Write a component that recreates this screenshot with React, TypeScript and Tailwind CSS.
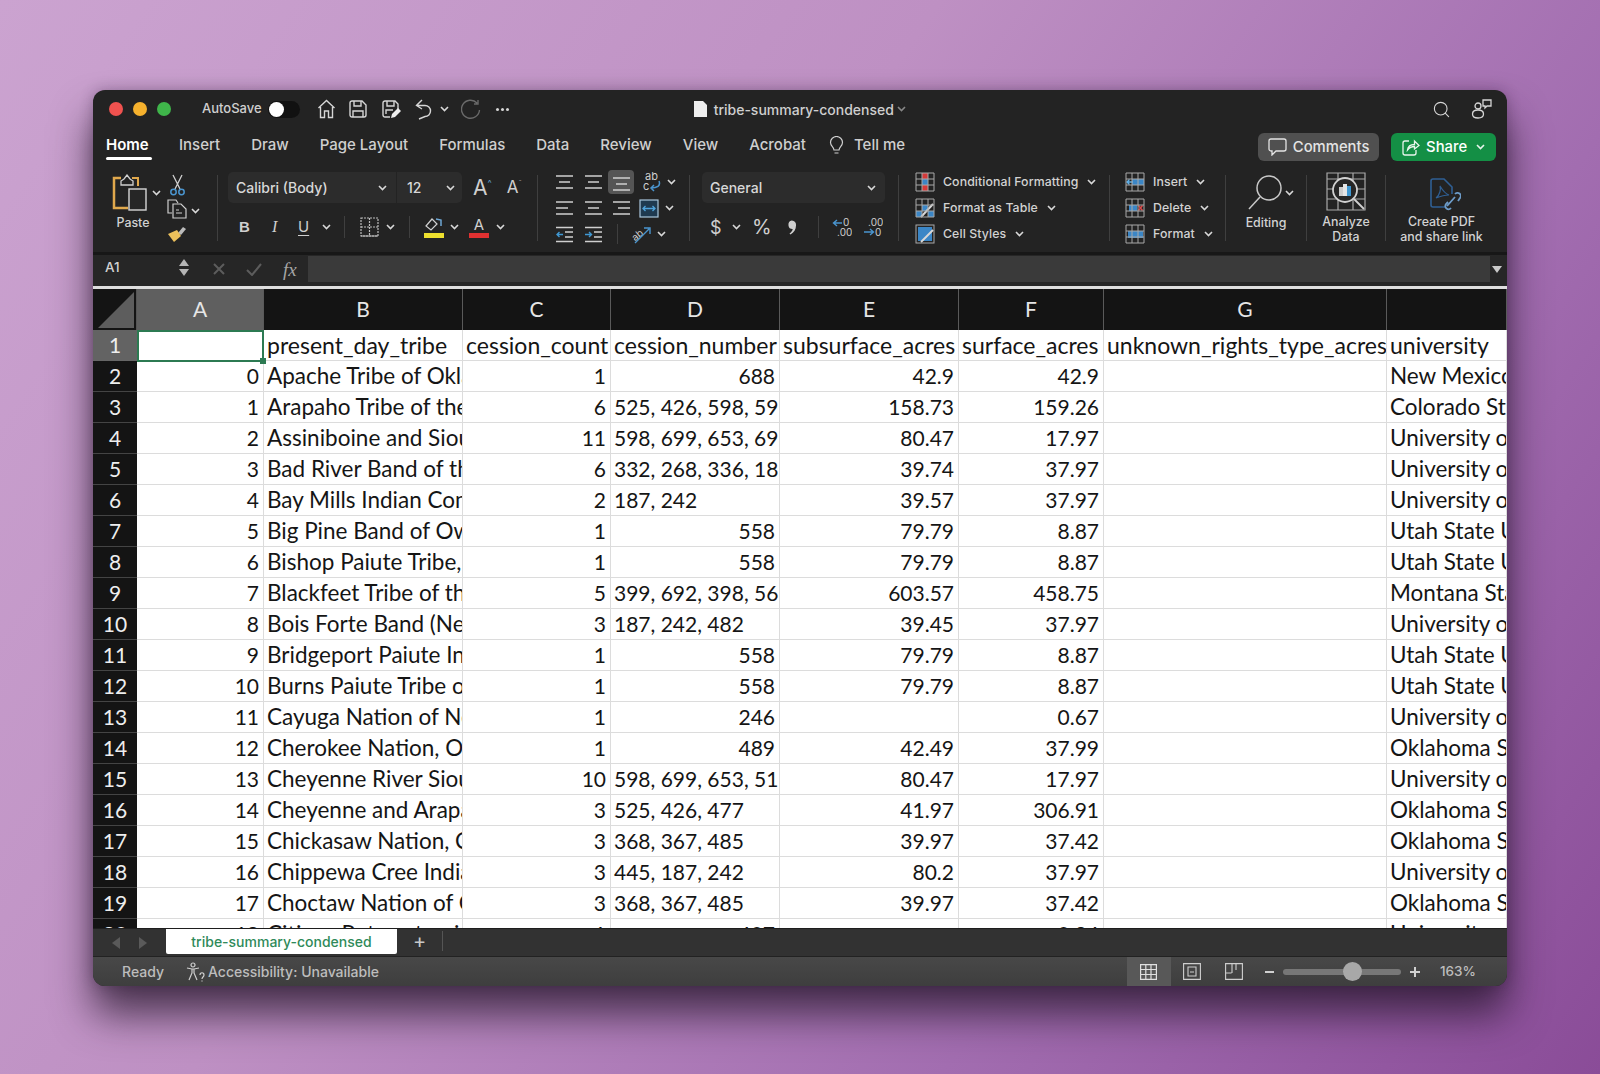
import { Search } from 'lucide-react';

const UI = "font-['Inter','Liberation_Sans',sans-serif]";
const CELL = "font-['Lato','Open_Sans',sans-serif]";

const rows: [string, string, string, string, string, string, string][] = [
  ['0', 'Apache Tribe of Oklahoma', '1', '688', '42.9', '42.9', 'New Mexico State University'],
  ['1', 'Arapaho Tribe of the Wind River', '6', '525, 426, 598, 599', '158.73', '159.26', 'Colorado State University'],
  ['2', 'Assiniboine and Sioux Tribes', '11', '598, 699, 653, 698', '80.47', '17.97', 'University of Minnesota'],
  ['3', 'Bad River Band of the Lake', '6', '332, 268, 336, 187', '39.74', '37.97', 'University of Minnesota'],
  ['4', 'Bay Mills Indian Community', '2', '187, 242', '39.57', '37.97', 'University of Minnesota'],
  ['5', 'Big Pine Band of Owens Valley', '1', '558', '79.79', '8.87', 'Utah State University'],
  ['6', 'Bishop Paiute Tribe, California', '1', '558', '79.79', '8.87', 'Utah State University'],
  ['7', 'Blackfeet Tribe of the Blackfeet', '5', '399, 692, 398, 567', '603.57', '458.75', 'Montana State University'],
  ['8', 'Bois Forte Band (Nett Lake)', '3', '187, 242, 482', '39.45', '37.97', 'University of Minnesota'],
  ['9', 'Bridgeport Paiute Indian Colony', '1', '558', '79.79', '8.87', 'Utah State University'],
  ['10', 'Burns Paiute Tribe of the Burns', '1', '558', '79.79', '8.87', 'Utah State University'],
  ['11', 'Cayuga Nation of New York', '1', '246', '', '0.67', 'University of Vermont'],
  ['12', 'Cherokee Nation, Oklahoma', '1', '489', '42.49', '37.99', 'Oklahoma State University'],
  ['13', 'Cheyenne River Sioux Tribe', '10', '598, 699, 653, 517', '80.47', '17.97', 'University of Minnesota'],
  ['14', 'Cheyenne and Arapaho Tribes', '3', '525, 426, 477', '41.97', '306.91', 'Oklahoma State University'],
  ['15', 'Chickasaw Nation, Oklahoma', '3', '368, 367, 485', '39.97', '37.42', 'Oklahoma State University'],
  ['16', 'Chippewa Cree Indians of Rocky', '3', '445, 187, 242', '80.2', '37.97', 'University of Minnesota'],
  ['17', 'Choctaw Nation of Oklahoma', '3', '368, 367, 485', '39.97', '37.42', 'Oklahoma State University'],
  ['18', 'Citizen Potawatomi Nation', '1', '407', '', '0.94', 'University of Kansas'],
];

const COLS = 'grid grid-cols-[44px_127px_199px_148px_169px_179px_145px_283px_120px]';

function Chev({ className = '', color = '#d8d8d8' }: { className?: string; color?: string }) {
  return (
    <svg width="9" height="6" viewBox="0 0 9 6" className={className} fill="none">
      <path d="M1 1l3.5 3.5L8 1" stroke={color} strokeWidth="1.6" />
    </svg>
  );
}

function Sep({ className = 'h-[66px] mt-[10px]' }: { className?: string }) {
  return <div className={`w-px shrink-0 bg-[#3f3f3f] ${className}`} />;
}

function Lines({ l, dim }: { l: [number, number][]; dim?: boolean }) {
  return (
    <svg width="19" height="16" viewBox="0 0 19 16" fill="none" stroke={dim ? '#bdbdbd' : '#d0d0d0'} strokeWidth="1.4">
      {l.map(([a, b], i) => (
        <path key={i} d={`M${a} ${2 + i * 6}H${b}`} />
      ))}
    </svg>
  );
}

function Indent({ flip }: { flip?: boolean }) {
  return (
    <svg width="19" height="17" viewBox="0 0 19 17" fill="none">
      <path d="M1 1.5h17M1 15.5h17M10 6h8M10 11h8" stroke="#cfcfcf" strokeWidth="1.3" />
      {flip ? (
        <path d="M1 8.5h6M5 6l2.5 2.5L5 11" stroke="#3f97d1" strokeWidth="1.4" />
      ) : (
        <path d="M8 8.5H2M4.5 6L2 8.5 4.5 11" stroke="#3f97d1" strokeWidth="1.4" />
      )}
    </svg>
  );
}

function GridBase({ children }: { children: React.ReactNode }) {
  return (
    <svg width="20" height="20" viewBox="0 0 20 20" fill="none" className="shrink-0">
      {children}
      <path d="M1 1h18v18H1zM1 7h18M1 13h18M7 1v18M13 1v18" stroke="#a9a9a9" strokeWidth="1" />
    </svg>
  );
}

function StyleRow({ icon, label }: { icon: React.ReactNode; label: string }) {
  return (
    <div className="flex h-[26px] items-center">
      {icon}
      <span className="ml-[8px] text-[12.3px] font-medium tracking-[0.1px] whitespace-nowrap text-[#d2d2d2]">{label}</span>
      <Chev className="ml-[9px]" />
    </div>
  );
}

function TitleBar() {
  return (
    <div className="flex h-[38px] items-center text-[#d6d6d6]">
      <div className="ml-[16px] h-[14px] w-[14px] rounded-full bg-[#f0524f]" />
      <div className="ml-[10px] h-[14px] w-[14px] rounded-full bg-[#f6b12d]" />
      <div className="ml-[10px] h-[14px] w-[14px] rounded-full bg-[#3fb54a]" />
      <span className="ml-[31px] text-[13px] font-medium text-[#cfcfcf]">AutoSave</span>
      <div className="ml-[6px] flex h-[17px] w-[32px] items-center rounded-full bg-[#111]">
        <div className="ml-px h-[15px] w-[15px] rounded-full bg-white" />
      </div>
      <svg className="ml-[17px]" width="19" height="20" viewBox="0 0 19 20" fill="none" stroke="#d6d6d6" strokeWidth="1.4">
        <path d="M1.5 9L9.5 1.5l8 7.5M3.5 8v10.500h4V12h4v6.500h4V8" />
      </svg>
      <svg className="ml-[13px]" width="18" height="18" viewBox="0 0 18 18" fill="none" stroke="#d6d6d6" strokeWidth="1.4">
        <path d="M1 3a2 2 0 012-2h10l4 4v10a2 2 0 01-2 2H3a2 2 0 01-2-2zM5 1v5h7V1M4 17v-6h10v6" />
      </svg>
      <svg className="ml-[15px]" width="19" height="19" viewBox="0 0 19 19" fill="none">
        <path d="M8 17H3a2 2 0 01-2-2V3a2 2 0 012-2h10l3 3v5M5 1v5h7V1M4 14v-4h7" stroke="#d6d6d6" strokeWidth="1.4" />
        <path d="M9 18l1-4 6-6 3 3-6 6z" fill="#eee" />
      </svg>
      <svg className="ml-[14px]" width="17" height="21" viewBox="0 0 17 21" fill="none" stroke="#d6d6d6" strokeWidth="1.4">
        <path d="M7 1L1.5 6.5 7 10M2 6.5h8a5.5 5.5 0 010 11l-6 2.500" />
      </svg>
      <Chev className="ml-[8px]" />
      <svg className="ml-[12px]" width="20" height="20" viewBox="0 0 20 20" fill="none" stroke="#6a6a6a" strokeWidth="1.4">
        <path d="M16 4A9 9 0 1018.500 11M17 1v4h-4" />
      </svg>
      <div className="ml-[15px] flex gap-[2px]">
        <div className="h-[3px] w-[3px] rounded-full bg-[#d6d6d6]" />
        <div className="h-[3px] w-[3px] rounded-full bg-[#d6d6d6]" />
        <div className="h-[3px] w-[3px] rounded-full bg-[#d6d6d6]" />
      </div>
      <svg className="ml-[184px]" width="15" height="18" viewBox="0 0 15 18">
        <path d="M1 1h9l4 4v12H1z" fill="#eeeeee" />
      </svg>
      <span className="ml-[6px] text-[14px] font-medium text-[#cfcfcf]">tribe-summary-condensed</span>
      <Chev className="ml-[3px]" color="#888" />
      <Search className="ml-[526px] text-[#d6d6d6]" size={19} strokeWidth={1.4} />
      <svg className="ml-[20px]" width="21" height="20" viewBox="0 0 21 20" fill="none" stroke="#d6d6d6" strokeWidth="1.3">
        <circle cx="7" cy="7" r="3" />
        <path d="M1.500 15c0-3 2-4 5.500-4s5.500 1 5.500 4-2 4-5.500 4-5.500-1-5.500-4zM12 1h8v6h-4l-2 2V7h-2z" />
      </svg>
    </div>
  );
}

function TabsRow() {
  const tabs = ['Insert', 'Draw', 'Page Layout', 'Formulas', 'Data', 'Review', 'View', 'Acrobat'];
  return (
    <div className="flex h-[37px] items-start pl-[13px]">
      <div className="flex h-[32px] flex-col justify-between pt-[7px]">
        <span className="text-[15px] leading-[20px] font-semibold text-white">Home</span>
        <div className="h-[3px] w-[46px] rounded-full bg-white" />
      </div>
      <div className="ml-[27px] flex gap-[31px] pt-[7px] text-[15px] leading-[20px] font-medium text-[#cfcfcf]">
        {tabs.map((t) => (
          <span key={t}>{t}</span>
        ))}
      </div>
      <svg className="mt-[8px] ml-[23px]" width="15" height="19" viewBox="0 0 15 19" fill="none" stroke="#cfcfcf" strokeWidth="1.200">
        <path d="M5 14c0-3-3.500-4-3.500-7.500a6 6 0 0112 0C13.500 10 10 11 10 14zM5.500 17h4" />
      </svg>
      <span className="ml-[10px] pt-[7px] text-[15px] leading-[20px] font-medium text-[#cfcfcf]">Tell me</span>
      <div className="ml-[353px] mt-[5px] flex h-[28px] w-[121px] items-center justify-center gap-[6px] rounded-[6px] bg-[#505050] text-[14.8px] font-medium text-[#e4e4e4]">
        <svg width="19" height="18" viewBox="0 0 19 18" fill="none" stroke="#e4e4e4" strokeWidth="1.300">
          <path d="M3 1h13a2 2 0 012 2v8a2 2 0 01-2 2H8l-4 4v-4H3a2 2 0 01-2-2V3a2 2 0 012-2z" />
        </svg>
        Comments
      </div>
      <div className="ml-[12px] mt-[5px] flex h-[28px] w-[105px] items-center justify-center gap-[6px] rounded-[6px] bg-[#148f45] text-[14.8px] font-medium text-white">
        <svg width="18" height="17" viewBox="0 0 18 17" fill="none" stroke="#e8f5ec" strokeWidth="1.300">
          <path d="M7 2H3a2 2 0 00-2 2v10a2 2 0 002 2h9a2 2 0 002-2v-3M5.500 11c.5-4 3-5.500 7-5.500V2L17 6.500 12.500 10V7.500c-3 0-5 1-7 3.500z" />
        </svg>
        Share
        <Chev className="ml-[3px]" color="#e8f5ec" />
      </div>
    </div>
  );
}

function Ribbon() {
  return (
    <div className="flex h-[87px] items-start text-[#d8d8d8]">
      {/* clipboard */}
      <div className="flex w-[124px] shrink-0 pt-[9px] pl-[19px]">
        <div className="flex w-[42px] flex-col items-center">
          <svg className="mr-[6px]" width="36" height="37" viewBox="0 0 36 37" fill="none">
            <path d="M9 4H2v30h14" stroke="#e0a84c" strokeWidth="2.500" />
            <path d="M20 4h6v8" stroke="#e0a84c" strokeWidth="2" />
            <path d="M9 7l3-2 3-4 3 4 3 2v4H9z" stroke="#cfcfcf" strokeWidth="1.300" />
            <rect x="17" y="15" width="17" height="21" stroke="#d6d6d6" strokeWidth="1.400" fill="#262626" />
          </svg>
          <span className="mt-[4px] text-[12.4px] leading-[16px] font-medium text-[#d2d2d2]">Paste</span>
        </div>
        <Chev className="mt-[16px] -ml-[2px]" />
        <div className="ml-[6px] flex flex-col items-center">
          <svg width="15" height="22" viewBox="0 0 15 22" fill="none">
            <path d="M3 1l7 14M12 1L5 15" stroke="#d0d0d0" strokeWidth="1.300" />
            <circle cx="3.500" cy="18" r="2.700" stroke="#4a95cf" strokeWidth="1.500" />
            <circle cx="11.500" cy="18" r="2.700" stroke="#4a95cf" strokeWidth="1.500" />
          </svg>
          <svg className="mt-[3px]" width="20" height="20" viewBox="0 0 20 20" fill="none" stroke="#cfcfcf" strokeWidth="1.200">
            <path d="M5 14H1V1h8l2 3M6 5h8l5 5v9H6zM9 14h6M9 11h3" />
          </svg>
          <svg className="mt-[4px]" width="20" height="20" viewBox="0 0 20 20">
            <path d="M11 10l5-6 3 2-5 6z" fill="#bbb" />
            <path d="M1 11l9-4 4 6-7 6z" fill="#ecc05b" />
          </svg>
        </div>
        <Chev className="mt-[34px] ml-[4px]" />
      </div>
      <Sep />
      {/* font */}
      <div className="w-[319px] shrink-0 pt-[7px] pl-[10px]">
        <div className="flex items-center">
          <div className="flex h-[31px] w-[168px] items-center justify-between rounded-l-[5px] bg-[#2c2c2c] pr-[9px] pl-[8px] text-[14px] font-medium">
            Calibri (Body)
            <Chev />
          </div>
          <div className="ml-px flex h-[31px] w-[65px] items-center justify-between rounded-r-[5px] bg-[#2c2c2c] pr-[7px] pl-[10px] text-[14px] font-medium">
            12
            <Chev />
          </div>
          <span className="ml-[11px] text-[21px] leading-none text-[#cfcfcf]">A</span>
          <span className="mb-[10px] text-[9px] leading-none text-[#5f9fca]">^</span>
          <span className="ml-[15px] text-[17px] leading-none text-[#cfcfcf]">A</span>
          <span className="mb-[10px] text-[8px] leading-none text-[#8a8a8a]">ˇ</span>
        </div>
        <div className="mt-[9px] flex h-[30px] items-center">
          <span className="ml-[11px] w-[12px] font-['Liberation_Sans',sans-serif] text-[15px] font-bold text-[#cfcfcf]">B</span>
          <span className="ml-[21px] w-[10px] font-['Liberation_Serif',serif] text-[16px] italic text-[#cfcfcf]">I</span>
          <span className="ml-[16px] w-[13px] text-[15px] leading-[18px] text-[#cfcfcf] underline underline-offset-[3px]">U</span>
          <Chev className="ml-[11px]" />
          <Sep className="ml-[13px] h-[22px]" />
          <svg className="ml-[15px]" width="19" height="20" viewBox="0 0 19 20" fill="none" stroke="#bdbdbd" strokeWidth="1.200">
            <path d="M1 1h17v18H1zM9.500 1v18M1 10h17" strokeDasharray="2 1" />
            <path d="M1 19h17" strokeDasharray="0" />
          </svg>
          <Chev className="ml-[7px]" />
          <Sep className="ml-[14px] h-[22px]" />
          <svg className="ml-[14px]" width="20" height="22" viewBox="0 0 20 22" fill="none">
            <path d="M2 10l6-7 5 5-6 6z" stroke="#d0d0d0" strokeWidth="1.200" />
            <path d="M12 3l5 1v6" stroke="#6fa8d6" strokeWidth="1.500" />
            <rect y="17" width="20" height="5" fill="#eee02e" />
          </svg>
          <Chev className="ml-[6px]" />
          <div className="ml-[10px] flex w-[20px] flex-col items-center">
            <span className="text-[15px] leading-[17px] text-[#d0d0d0]">A</span>
            <div className="h-[5px] w-[20px] bg-[#e03131]" />
          </div>
          <Chev className="ml-[7px]" />
        </div>
      </div>
      <Sep />
      {/* alignment */}
      <div className="w-[151px] shrink-0 pt-[4px] pl-[17px]">
        <div className="flex h-[26px] items-center">
          <Lines l={[[1, 18], [4, 15], [1, 18]]} />
          <div className="ml-[10px]">
            <Lines l={[[1, 18], [4, 15], [1, 18]]} />
          </div>
          <div className="ml-[5px] flex h-[24px] w-[26px] items-center justify-center rounded-[4px] bg-[#555]">
            <div className="mt-[4px]">
              <Lines l={[[1, 18], [4, 15], [1, 18]]} />
            </div>
          </div>
          <svg className="ml-[9px]" width="18" height="22" viewBox="0 0 18 22" fill="none">
            <text x="2" y="9" fontSize="11" fill="#cfcfcf" fontFamily="Inter">ab</text>
            <text x="0" y="19" fontSize="11" fill="#cfcfcf" fontFamily="Inter">c</text>
            <path d="M16 10c2 5-2 7-8 7M11 14l-3 3 3 3" stroke="#4a95cf" strokeWidth="1.500" />
          </svg>
          <Chev className="ml-[6px]" />
        </div>
        <div className="flex h-[26px] items-center">
          <Lines l={[[1, 18], [1, 13], [1, 18]]} />
          <div className="ml-[10px]">
            <Lines l={[[1, 18], [4, 15], [1, 18]]} />
          </div>
          <div className="ml-[9px]">
            <Lines l={[[1, 18], [6, 18], [1, 18]]} />
          </div>
          <svg className="ml-[8px]" width="20" height="19" viewBox="0 0 20 19" fill="none">
            <rect x="1" y="1" width="18" height="17" stroke="#a9c6dc" strokeWidth="1.200" fill="#1f3a50" />
            <path d="M4 9.500h12M6.500 7L4 9.500 6.500 12M13.500 7L16 9.500 13.500 12" stroke="#4fa3dc" strokeWidth="1.300" />
          </svg>
          <Chev className="ml-[6px]" />
        </div>
        <div className="flex h-[26px] items-center">
          <Indent />
          <div className="ml-[10px]">
            <Indent flip />
          </div>
          <Sep className="ml-[14px] h-[20px]" />
          <svg className="ml-[12px]" width="21" height="19" viewBox="0 0 21 19" fill="none">
            <text x="1" y="13" fontSize="10" fill="#cfcfcf" fontFamily="Inter" transform="rotate(-38 8 9)">ab</text>
            <path d="M5 18L19 4M14 3h6v6" stroke="#4a95cf" strokeWidth="1.400" />
          </svg>
          <Chev className="ml-[6px]" />
        </div>
      </div>
      <Sep />
      {/* number */}
      <div className="w-[208px] shrink-0 pt-[7px] pl-[12px]">
        <div className="flex h-[31px] w-[183px] items-center justify-between rounded-[5px] bg-[#2c2c2c] pr-[9px] pl-[8px] text-[14px] font-medium">
          General
          <Chev />
        </div>
        <div className="mt-[9px] flex h-[30px] items-center">
          <span className="ml-[8px] w-[11px] text-[18px] text-[#cfcfcf]">$</span>
          <Chev className="ml-[11px]" />
          <span className="ml-[11px] text-[20px] text-[#cfcfcf]">%</span>
          <svg className="ml-[16px]" width="10" height="15" viewBox="0 0 10 15">
            <path d="M3.800 0.500a4.200 4.200 0 014.200 5c0 4-2 7-5.500 9l-1-1c2-1.500 3-3 3.200-4.500A4.300 4.300 0 013.800.5z" fill="#cfcfcf" />
          </svg>
          <Sep className="ml-[20px] h-[22px]" />
          <svg className="ml-[13px]" width="20" height="20" viewBox="0 0 20 20" fill="none">
            <text x="11" y="9" fontSize="10" fill="#cfcfcf" fontFamily="Inter">0</text>
            <text x="5" y="19" fontSize="10" fill="#cfcfcf" fontFamily="Inter">.00</text>
            <path d="M10 6H2M5 3L1.500 6 5 9" stroke="#4a95cf" strokeWidth="1.400" />
          </svg>
          <svg className="ml-[11px]" width="20" height="20" viewBox="0 0 20 20" fill="none">
            <text x="5" y="9" fontSize="10" fill="#cfcfcf" fontFamily="Inter">.00</text>
            <text x="12" y="19" fontSize="10" fill="#cfcfcf" fontFamily="Inter">0</text>
            <path d="M1 15h9M7 12l3.500 3L7 18" stroke="#4a95cf" strokeWidth="1.400" />
          </svg>
        </div>
      </div>
      <Sep />
      {/* styles */}
      <div className="w-[210px] shrink-0 pt-[4px] pl-[16px]">
        <StyleRow
          label="Conditional Formatting"
          icon={
            <GridBase>
              <path d="M7 1h6v6H7z" fill="#d33a3a" />
              <path d="M7 7h6v6H7z" fill="#3b86c6" />
              <path d="M7 13h6v6H7z" fill="#d33a3a" />
            </GridBase>
          }
        />
        <StyleRow
          label="Format as Table"
          icon={
            <GridBase>
              <path d="M7 7h6v6H7zM13 13h6v6h-6zM1 13h6v6H1z" fill="#3b86c6" />
              <path d="M6 19L18 6" stroke="#d8d8d8" strokeWidth="2" />
            </GridBase>
          }
        />
        <StyleRow
          label="Cell Styles"
          icon={
            <svg width="20" height="20" viewBox="0 0 20 20" fill="none" className="shrink-0">
              <rect x="1" y="1" width="18" height="18" stroke="#a9a9a9" />
              <rect x="3" y="3" width="14" height="14" fill="#3b86c6" />
              <path d="M6 18L18 6" stroke="#d8d8d8" strokeWidth="2" />
            </svg>
          }
        />
      </div>
      <Sep />
      {/* cells */}
      <div className="w-[115px] shrink-0 pt-[4px] pl-[15px]">
        <StyleRow
          label="Insert"
          icon={
            <GridBase>
              <path d="M7 7h12v6H7z" fill="#3b86c6" />
              <path d="M8 10H2M4.500 7.500L2 10l2.500 2.500" stroke="#5fb0e8" strokeWidth="1.400" />
            </GridBase>
          }
        />
        <StyleRow
          label="Delete"
          icon={
            <GridBase>
              <path d="M4 7h8v6H4z" fill="#3b86c6" />
              <path d="M13.500 7.500l4 5M17.500 7.500l-4 5" stroke="#d94a4a" strokeWidth="1.500" />
            </GridBase>
          }
        />
        <StyleRow
          label="Format"
          icon={
            <GridBase>
              <path d="M3 7h15v7H3z" fill="#3b86c6" />
            </GridBase>
          }
        />
      </div>
      <Sep />
      {/* editing */}
      <div className="flex w-[80px] shrink-0 flex-col items-center pt-[9px]">
        <div className="flex items-center">
          <svg width="36" height="37" viewBox="0 0 36 37" fill="none" stroke="#c8c8c8" strokeWidth="1.500">
            <circle cx="21" cy="14" r="12" />
            <path d="M12 23L1 35" />
          </svg>
          <Chev className="ml-[1px] -mr-[9px]" />
        </div>
        <span className="mt-[4px] text-[12.4px] leading-[16px] font-medium text-[#d2d2d2]">Editing</span>
      </div>
      <Sep />
      {/* analyze */}
      <div className="flex w-[78px] shrink-0 flex-col items-center pt-[7px]">
        <svg width="40" height="39" viewBox="0 0 40 39" fill="none">
          <path d="M1 1h38v37H1zM1 7h38M1 17h38M1 27h38M12 1v37M27 1v37" stroke="#a9a9a9" strokeWidth="1.200" />
          <circle cx="19" cy="18" r="12" fill="#262626" stroke="#d0d0d0" strokeWidth="1.800" />
          <path d="M13 15h4v9h-4z" fill="#ccc" />
          <path d="M17 12h4v12h-4z" fill="#e4e4e4" />
          <path d="M21 14h4v10h-4z" fill="#3f97d1" />
          <path d="M28 27l10 10" stroke="#d0d0d0" strokeWidth="1.800" />
        </svg>
        <span className="mt-[3px] text-center text-[12.4px] leading-[15px] font-medium text-[#d2d2d2]">
          Analyze<br />Data
        </span>
      </div>
      <Sep />
      {/* acrobat */}
      <div className="flex w-[114px] shrink-0 flex-col items-center pt-[13px]">
        <svg className="ml-[4px]" width="32" height="33" viewBox="0 0 32 33" fill="none">
          <path d="M17 29H4a2 2 0 01-2-2V3a2 2 0 012-2h11l8 8v7" stroke="#2f5f94" strokeWidth="1.600" />
          <path d="M7 20c4-3 5-9 4-12 3 5 6 8 9 9-4 0-8 1-13 3z" stroke="#2f5f94" strokeWidth="1.200" />
          <path d="M18 28l8-9M22 30a3 3 0 01-5-4l2-2M26 16a3 3 0 015 4l-2 3" stroke="#6d9cc9" strokeWidth="1.800" />
        </svg>
        <span className="mt-[3px] mr-[3px] text-center text-[12.4px] leading-[15px] font-medium whitespace-nowrap text-[#d2d2d2]">
          Create PDF<br />and share link
        </span>
      </div>
    </div>
  );
}

function FormulaBar() {
  return (
    <div className="border-t-[3px] border-[#171717] bg-[#262626]">
      <div className="flex h-[31px] items-start pt-[1px]">
        <span className="mt-[1px] ml-[12px] w-[74px] text-[13.500px] font-medium text-[#d2d2d2]">A1</span>
        <div className="mt-[3px] flex flex-col gap-[3px]">
          <div className="h-0 w-0 border-x-[5px] border-b-[7px] border-x-transparent border-b-[#b5b5b5]" />
          <div className="h-0 w-0 border-x-[5px] border-t-[7px] border-x-transparent border-t-[#b5b5b5]" />
        </div>
        <svg className="mt-[7px] ml-[24px]" width="12" height="12" viewBox="0 0 12 12" stroke="#5c5c5c" strokeWidth="2">
          <path d="M1 1l10 10M11 1L1 11" />
        </svg>
        <svg className="mt-[7px] ml-[21px]" width="16" height="13" viewBox="0 0 16 13" fill="none" stroke="#5c5c5c" strokeWidth="2">
          <path d="M1 7l5 5L15 1" />
        </svg>
        <span className="ml-[21px] w-[25px] font-['Liberation_Serif',serif] text-[19px] text-[#a5a5a5] italic">fx</span>
        <div className="h-[26px] w-[1182px] bg-[#3a3a3a]" />
        <div className="mt-[10px] ml-[2px] h-0 w-0 border-x-[5px] border-t-[7px] border-x-transparent border-t-[#c8c8c8]" />
      </div>
    </div>
  );
}

// size: column titles are a bit larger than the tribe names, digits smaller (Lato standing in for Calibri)
function Cell({ children, size = 'text-[22.500px]' }: { children?: React.ReactNode; size?: string }) {
  return (
    <div className={`h-[31px] overflow-hidden border-r border-b border-[#dcdcdc] pr-[4px] pl-[3px] leading-[30px] whitespace-nowrap text-[#151515] ${size}`}>
      {children}
    </div>
  );
}

function NumCell({ children }: { children?: React.ReactNode }) {
  return (
    <div className="h-[31px] overflow-hidden border-r border-b border-[#dcdcdc] px-[4px] text-right text-[21px] leading-[30px] whitespace-nowrap text-[#151515]">
      {children}
    </div>
  );
}

function Sheet() {
  const letters = ['A', 'B', 'C', 'D', 'E', 'F', 'G', ''];
  const titles = ['present_day_tribe', 'cession_count', 'cession_number', 'subsurface_acres', 'surface_acres', 'unknown_rights_type_acres', 'university'];
  return (
    <div className={`relative h-[639px] overflow-hidden bg-white ${CELL}`}>
      <div className={`${COLS} h-[41px] bg-[#141414] text-[21px] leading-[40px] text-[#e6e6e6]`}>
        <div className="flex items-end justify-end border-r border-[#555] pr-[2px] pb-[2px]">
          <svg width="36" height="36" viewBox="0 0 36 36">
            <path d="M36 0v36H0z" fill="#5d5d5d" />
          </svg>
        </div>
        {letters.map((l, i) => (
          <div key={i} className={`border-r border-[#5a5a5a] text-center ${i === 0 ? 'bg-[#5f5f5f]' : ''}`}>
            {l}
          </div>
        ))}
      </div>
      <div className={COLS}>
        <div className="h-[31px] border-b border-[#666] bg-[#636363] text-center text-[21px] leading-[30px] text-[#eee]">1</div>
        <Cell />
        {titles.map((t) => (
          <Cell key={t} size="text-[23px]">{t}</Cell>
        ))}
      </div>
      {rows.map((r, i) => (
        <div key={i} className={COLS}>
          <div className="h-[31px] border-b border-[#444] bg-[#141414] text-center text-[21px] leading-[30px] text-[#eee]">{i + 2}</div>
          <NumCell>{r[0]}</NumCell>
          <Cell>{r[1]}</Cell>
          <NumCell>{r[2]}</NumCell>
          {r[3].includes(',') ? <Cell size="text-[21px]">{r[3]}</Cell> : <NumCell>{r[3]}</NumCell>}
          <NumCell>{r[4]}</NumCell>
          <NumCell>{r[5]}</NumCell>
          <Cell />
          <Cell>{r[6]}</Cell>
        </div>
      ))}
      {/* active cell outline */}
      <div className="absolute top-[41px] left-[44px] h-[32px] w-[127px] border-2 border-[#2c7a52]">
        <div className="absolute -right-[4px] -bottom-[4px] h-[6px] w-[6px] bg-[#2c7a52]" />
      </div>
    </div>
  );
}

function SheetTabs() {
  return (
    <div className="flex h-[28px] items-start border-t border-[#1e1e1e] bg-[#323232]">
      <div className="mt-[8px] ml-[19px] h-0 w-0 border-y-[6px] border-r-[8px] border-y-transparent border-r-[#5a5a5a]" />
      <div className="mt-[8px] ml-[19px] h-0 w-0 border-y-[6px] border-l-[8px] border-y-transparent border-l-[#5a5a5a]" />
      <div className="ml-[19px] flex h-[25px] w-[231px] items-center justify-center rounded-b-[2px] bg-white text-[14px] font-medium text-[#2f8a5a]">
        tribe-summary-condensed
      </div>
      <span className="ml-[16px] text-[20px] leading-[24px] text-[#c8c8c8]">+</span>
      <div className="ml-[16px] mt-[2px] h-[20px] w-px bg-[#555]" />
    </div>
  );
}

function StatusBar() {
  return (
    <div className="flex h-[30px] items-center border-t border-[#222] bg-[linear-gradient(180deg,#484848,#3e3e3e)] text-[14px] font-medium text-[#bdbdbd]">
      <span className="ml-[29px]">Ready</span>
      <svg className="ml-[22px]" width="19" height="20" viewBox="0 0 19 20" fill="none" stroke="#cfcfcf" strokeWidth="1.200">
        <circle cx="7" cy="3" r="2" />
        <path d="M1 6l5 1h2l5-1M6 7v4l-3 7M8 7v4l3 7M14 13c0-3 4-3 4 0 0 2-2 2-2 4M16 18.500v1" />
      </svg>
      <span className="ml-[3px]">Accessibility: Unavailable</span>
      <div className="ml-[748px] flex h-[30px] w-[44px] items-center justify-center bg-[#585858]">
        <svg width="17" height="16" viewBox="0 0 17 16" fill="none" stroke="#e0e0e0" strokeWidth="1.200">
          <path d="M.6.6h15.800v14.800H.6zM.6 5.500h15.800M.6 10.500h15.800M5.800.6v14.800M11 .6v14.800" />
        </svg>
      </div>
      <svg className="ml-[12px]" width="18" height="17" viewBox="0 0 18 17" fill="none" stroke="#cfcfcf" strokeWidth="1.100">
        <path d="M.6.6h16.800v15.800H.6z" />
        <path d="M5 4h8v9H5zM7 9h4" />
      </svg>
      <svg className="ml-[24px]" width="18" height="17" viewBox="0 0 18 17" fill="none" stroke="#cfcfcf" strokeWidth="1.100">
        <path d="M.6.6h16.800v15.800H.6zM.6 10h6M7 .6V10M11 .6V7" />
      </svg>
      <span className="ml-[22px] h-[2px] w-[9px] bg-[#d0d0d0]" />
      <div className="ml-[9px] flex h-[6px] w-[118px] items-center rounded-full bg-[#777]">
        <div className="ml-[60px] h-[19px] w-[19px] rounded-full bg-[#a8a8a8]" />
      </div>
      <span className="relative ml-[9px] h-[10px] w-[10px]">
        <span className="absolute top-[4px] left-0 h-[2px] w-[10px] bg-[#d0d0d0]" />
        <span className="absolute top-0 left-[4px] h-[10px] w-[2px] bg-[#d0d0d0]" />
      </span>
      <span className="ml-[20px] text-[13.500px]">163%</span>
    </div>
  );
}

export default function App() {
  return (
    <div className="h-[1074px] w-[1600px] overflow-hidden bg-[linear-gradient(125deg,#cba3d0_0%,#be90c3_40%,#a26db0_72%,#8a4c98_100%)] pt-[90px] pl-[93px]">
      <div className={`h-[896px] w-[1414px] overflow-hidden rounded-[12px] bg-[#232323] shadow-[0_28px_40px_rgba(35,20,40,0.75),0_0_14px_rgba(40,20,50,0.3)] ${UI}`}>
        <TitleBar />
        <TabsRow />
        <Ribbon />
        <FormulaBar />
        <div className="h-[3px] bg-[#dedede]" />
        <Sheet />
        <SheetTabs />
        <StatusBar />
      </div>
    </div>
  );
}
